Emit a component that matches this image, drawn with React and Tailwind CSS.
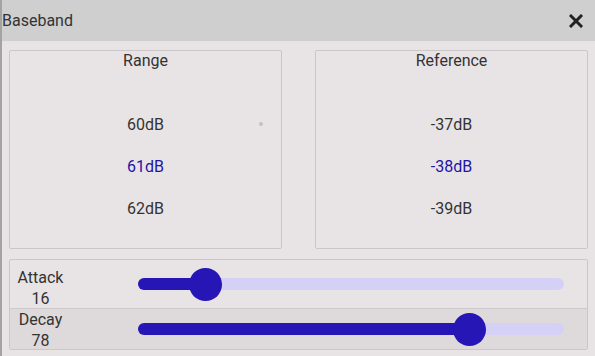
import React, { useState } from "react";

const font = { fontFamily: "Roboto, 'Noto Sans', sans-serif" };

function ValueList({ title, values, selected, marker }) {
    return (
        <div className="relative flex-1 h-[199px] border border-[#cbc7c9] rounded-[2px] flex flex-col items-center">
            <div className="pt-[1px] h-[19px] text-[16px] leading-[18px] text-[#333]">{title}</div>
            <div className="mt-[34px] flex flex-col items-center">
                {values.map((v, i) => (
                    <div
                        key={v}
                        className={`h-[42px] flex items-center text-[16px] ${i === selected ? "text-[#2015a6]" : "text-[#333]"}`}
                    >
                        {v}
                    </div>
                ))}
            </div>
            {marker && <div className="absolute left-[249px] top-[71px] w-[4px] h-[4px] rounded-full bg-[#c4c0c2]" />}
        </div>
    );
}

function SliderRow({ label, value, onChange, rowClass, labelClass }) {
    return (
        <div className={`flex ${rowClass}`}>
            <div className={`w-[128px] pl-[7px] ${labelClass}`}>
                <div className="w-[47px] text-center text-[16px] leading-[21px] text-[#333]">
                    <div>{label}</div>
                    <div>{value}</div>
                </div>
            </div>
            <div className="flex-1 mr-[23px] flex items-center">
                <div
                    className="relative w-full h-[12px] rounded-full bg-[#d5d0f6] cursor-pointer"
                    onClick={(e) => {
                        const r = e.currentTarget.getBoundingClientRect();
                        onChange(Math.round(((e.clientX - r.left) / r.width) * 100));
                    }}
                >
                    <div
                        className="absolute left-0 top-0 h-full rounded-full bg-[#2616b5]"
                        style={{ width: `${value}%` }}
                    />
                    <div
                        className="absolute top-1/2 w-[33px] h-[33px] -ml-[17px] -mt-[16px] rounded-full bg-[#2616b5]"
                        style={{ left: `${value}%` }}
                    />
                </div>
            </div>
        </div>
    );
}

export default function App() {
    const [attack, setAttack] = useState(16);
    const [decay, setDecay] = useState(78);

    return (
        <div className="w-[595px] h-[356px] bg-[#e8e4e6] border-l-2 border-[#a3a3a3] overflow-hidden" style={font}>
            {/* title bar */}
            <div className="h-[41px] bg-[#cfcfcf] flex items-center justify-between pr-[12px]">
                <span className="text-[16px] text-[#333]">Baseband</span>
                <svg width="14" height="14" viewBox="0 0 14 14">
                    <path d="M2 2 L12 12 M12 2 L2 12" stroke="#222" strokeWidth="3" strokeLinecap="square" />
                </svg>
            </div>

            <div className="pl-[7px] pr-[7px] pt-[9px]">
                <div className="flex gap-[33px]">
                    <ValueList title="Range" values={["60dB", "61dB", "62dB"]} selected={1} marker />
                    <ValueList title="Reference" values={["-37dB", "-38dB", "-39dB"]} selected={1} />
                </div>

                <div className="mt-[10px] border border-[#cbc7c9] rounded-[2px]">
                    <SliderRow
                        label="Attack"
                        value={attack}
                        onChange={setAttack}
                        rowClass="h-[48px]"
                        labelClass="pt-[7px]"
                    />
                    <SliderRow
                        label="Decay"
                        value={decay}
                        onChange={setDecay}
                        rowClass="h-[41px] bg-[#dedadc] border-t border-[#cdc9cb]"
                        labelClass="pt-0"
                    />
                </div>
            </div>
        </div>
    );
}
